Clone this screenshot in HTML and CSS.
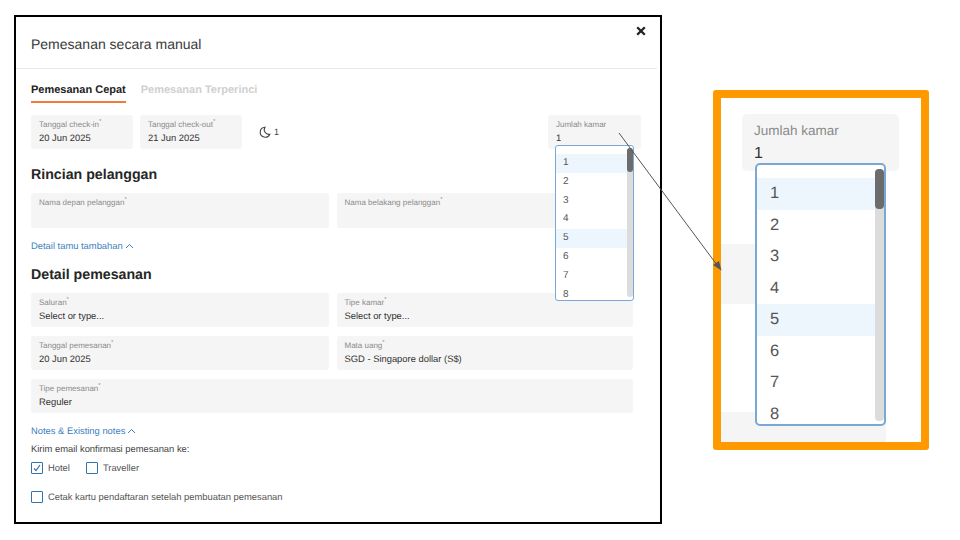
FILE: index.html
```html
<!DOCTYPE html>
<html lang="id">
    <head>
        <meta charset="utf-8">
        <title>Pemesanan secara manual</title>
        <link rel="stylesheet" href="styles.css">
    </head>
    <body>
        <div class="modal">
            <div class="modal-header">
                <div class="modal-title">Pemesanan secara manual</div>
                <svg class="close" width="10" height="10" viewBox="0 0 10 10"><path d="M1.2 1.2L8.8 8.8M8.8 1.2L1.2 8.8" stroke="#222" stroke-width="2.3"/></svg>
            </div>
            <div class="modal-body">
                <div class="tabs">
                    <div class="tab active">Pemesanan Cepat</div>
                    <div class="tab">Pemesanan Terperinci</div>
                </div>
                <div class="row-dates">
                    <div class="field field-date">
                        <div class="field-label">Tanggal check-in<sup>*</sup></div>
                        <div class="field-value">20 Jun 2025</div>
                    </div>
                    <div class="field field-date">
                        <div class="field-label">Tanggal check-out<sup>*</sup></div>
                        <div class="field-value">21 Jun 2025</div>
                    </div>
                    <div class="nights">
                        <svg width="13" height="13" viewBox="0 0 13 13"><path d="M7 1.2A5 5 0 1 0 11.8 8.2A4.6 4.6 0 0 1 7 1.2Z" fill="none" stroke="#444" stroke-width="1.1"/></svg>
                        <span>1</span>
                    </div>
                    <div class="field field-rooms">
                        <div class="field-label">Jumlah kamar</div>
                        <div class="field-value">1</div>
                        <div class="dropdown">
                            <div class="dropdown-item selected">1</div>
                            <div class="dropdown-item">2</div>
                            <div class="dropdown-item">3</div>
                            <div class="dropdown-item">4</div>
                            <div class="dropdown-item selected">5</div>
                            <div class="dropdown-item">6</div>
                            <div class="dropdown-item">7</div>
                            <div class="dropdown-item">8</div>
                            <div class="scrollbar"><div class="scrollbar-thumb"></div></div>
                        </div>
                    </div>
                </div>

                <h2 class="section-title first">Rincian pelanggan</h2>
                <div class="grid-2">
                    <div class="field field-tall">
                        <div class="field-label">Nama depan pelanggan<sup>*</sup></div>
                    </div>
                    <div class="field field-tall">
                        <div class="field-label">Nama belakang pelanggan<sup>*</sup></div>
                    </div>
                </div>
                <div class="link link-guest">Detail tamu tambahan
                    <svg width="9" height="6" viewBox="0 0 9 6"><path d="M1 5L4.5 1.5L8 5" fill="none" stroke="#3d7fc0"/></svg>
                </div>

                <h2 class="section-title">Detail pemesanan</h2>
                <div class="grid-2">
                    <div class="field">
                        <div class="field-label">Saluran<sup>*</sup></div>
                        <div class="field-value">Select or type...</div>
                    </div>
                    <div class="field">
                        <div class="field-label">Tipe kamar<sup>*</sup></div>
                        <div class="field-value">Select or type...</div>
                    </div>
                    <div class="field">
                        <div class="field-label">Tanggal pemesanan<sup>*</sup></div>
                        <div class="field-value">20 Jun 2025</div>
                    </div>
                    <div class="field">
                        <div class="field-label">Mata uang<sup>*</sup></div>
                        <div class="field-value">SGD - Singapore dollar (S$)</div>
                    </div>
                    <div class="field field-wide">
                        <div class="field-label">Tipe pemesanan<sup>*</sup></div>
                        <div class="field-value">Reguler</div>
                    </div>
                </div>
                <div class="link link-notes">Notes &amp; Existing notes
                    <svg width="9" height="6" viewBox="0 0 9 6"><path d="M1 5L4.5 1.5L8 5" fill="none" stroke="#3d7fc0"/></svg>
                </div>
                <div class="email-title">Kirim email konfirmasi pemesanan ke:</div>
                <div class="check-row">
                    <div class="check">
                        <span class="box"><svg width="10" height="10" viewBox="0 0 10 10"><path d="M2 5.5L4 7.5L8 2" fill="none" stroke="#2f73b0" stroke-width="1.2"/></svg></span>
                        Hotel
                    </div>
                    <div class="check">
                        <span class="box"></span>
                        Traveller
                    </div>
                </div>
                <div class="check check-print">
                    <span class="box"></span>
                    Cetak kartu pendaftaran setelah pembuatan pemesanan
                </div>
            </div>
        </div>

        <div class="callout">
            <div class="ghost ghost-left"></div>
            <div class="ghost ghost-bottom"></div>
            <div class="field field-zoom">
                <div class="field-label">Jumlah kamar</div>
                <div class="field-value">1</div>
                <div class="dropdown dropdown-zoom">
                    <div class="dropdown-item selected">1</div>
                    <div class="dropdown-item">2</div>
                    <div class="dropdown-item">3</div>
                    <div class="dropdown-item">4</div>
                    <div class="dropdown-item selected">5</div>
                    <div class="dropdown-item">6</div>
                    <div class="dropdown-item">7</div>
                    <div class="dropdown-item">8</div>
                    <div class="scrollbar"><div class="scrollbar-thumb"></div></div>
                </div>
            </div>
        </div>

        <svg class="arrow" width="960" height="540" viewBox="0 0 960 540">
            <path d="M619 133L717 265" stroke="#555" stroke-width="1" fill="none"/>
            <path d="M721.5 270.5L713 265L719 261Z" fill="#555"/>
        </svg>
    </body>
</html>
```

FILE: styles.css
```css
* {
    box-sizing: border-box;
}

body {
    margin: 0;
    padding: 15px 0 0 14px;
    width: 960px;
    height: 540px;
    overflow: hidden;
    display: flex;
    align-items: flex-start;
    background-color: #fff;
    font-family: "Liberation Sans", Arial, sans-serif;
    text-rendering: geometricPrecision;
    color: #333;
}

.modal {
    width: 648px;
    height: 509px;
    flex: none;
    border: 2px solid #000;
    background-color: #fff;
}

.modal-header {
    height: 52px;
    margin-right: 3px;
    padding: 19px 11px 0 15px;
    display: flex;
    justify-content: space-between;
    align-items: flex-start;
    border-bottom: 1px solid #e8e8e8;
}

.modal-title {
    font-size: 14px;
    line-height: 17px;
    color: #3a3a3a;
}

.close {
    margin-top: -10px;
}

.modal-body {
    padding: 0 27px 0 15px;
}

.tabs {
    display: flex;
    gap: 15px;
    height: 34px;
    padding-top: 14px;
}

.tab {
    height: 20px;
    font-size: 11px;
    line-height: 14px;
    font-weight: bold;
    color: #cfcfcf;
}

.tab.active {
    color: #222;
    border-bottom: 2px solid #f47a3c;
}

.row-dates {
    display: flex;
    align-items: center;
    gap: 7px;
    margin-top: 12px;
}

.field {
    position: relative;
    height: 34px;
    padding: 5px 8px;
    border-radius: 3px;
    background-color: #f5f5f5;
}

.field-tall {
    height: 35px;
}

.field-date {
    width: 102px;
}

.field-rooms {
    width: 93px;
    margin: 0 -8px 0 auto;
}

.field-label {
    font-size: 8px;
    line-height: 10px;
    color: #8a8a8a;
}

.field-label sup {
    font-size: 6px;
    line-height: 0;
}

.field-value {
    margin-top: 2px;
    font-size: 9.4px;
    line-height: 12px;
    color: #333;
}

.nights {
    display: flex;
    align-items: center;
    gap: 3px;
    margin-left: 9px;
    font-size: 9px;
    color: #444;
}

.section-title {
    margin: 0;
    padding: 14px 0 9px;
    font-size: 14.2px;
    line-height: 18px;
    font-weight: bold;
    color: #262626;
}

.section-title.first {
    padding-top: 17px;
}

.grid-2 {
    display: grid;
    grid-template-columns: 297.5px 296.5px;
    gap: 9px 8px;
}

.field-wide {
    grid-column: 1 / 3;
}

.link {
    display: flex;
    align-items: center;
    gap: 2px;
    font-size: 9.4px;
    line-height: 12px;
    color: #3d7fc0;
}

.link-guest {
    margin-top: 12px;
}

.link-notes {
    margin-top: 12px;
}

.email-title {
    margin-top: 6px;
    font-size: 9.4px;
    line-height: 12px;
    color: #444;
}

.check-row {
    display: flex;
    gap: 16px;
    margin-top: 7px;
}

.check {
    display: flex;
    align-items: center;
    gap: 5px;
    font-size: 9.4px;
    line-height: 12px;
    color: #555;
}

.check-print {
    margin-top: 17px;
}

.box {
    width: 12px;
    height: 12px;
    display: flex;
    align-items: center;
    justify-content: center;
    border: 1.5px solid #2f73b0;
    border-radius: 1px;
    background-color: #fff;
}

.dropdown {
    position: absolute;
    top: 30px;
    left: 7px;
    width: 79px;
    height: 156px;
    padding-top: 8px;
    overflow: hidden;
    border: 1.5px solid #7aa8d6;
    border-radius: 3px;
    background-color: #fff;
    z-index: 2;
}

.dropdown-item {
    height: 18.8px;
    padding-left: 7px;
    font-size: 10px;
    line-height: 18.8px;
    color: #555;
}

.dropdown-item.selected {
    background-color: #eef6fd;
}

.scrollbar {
    position: absolute;
    top: 2px;
    right: 0;
    width: 6px;
    height: 149px;
    border-radius: 3px;
    background-color: #dcdcdc;
}

.scrollbar-thumb {
    height: 24px;
    border-radius: 3px;
    background-color: #6c6c6c;
}

.callout {
    position: relative;
    width: 216px;
    height: 360px;
    flex: none;
    margin: 75px 0 0 51px;
    padding: 16px 22px 0 21px;
    border: 8px solid #ff9900;
    border-radius: 3px;
    background-color: #fff;
}

.ghost {
    position: absolute;
    background-color: #f5f5f5;
}

.ghost-left {
    top: 146px;
    left: 0;
    width: 34px;
    height: 60px;
}

.ghost-bottom {
    bottom: 0;
    left: 0;
    width: 165px;
    height: 30px;
}

.field-zoom {
    width: 157px;
    height: 57px;
    padding: 8px 12px;
    border-radius: 5px;
}

.field-zoom .field-label {
    font-size: 13.5px;
    line-height: 17px;
    color: #8a8a8a;
}

.field-zoom .field-value {
    margin-top: 6px;
    font-size: 16px;
    line-height: 18px;
}

.dropdown-zoom {
    top: 49px;
    left: 13px;
    width: 131px;
    height: 263px;
    padding-top: 13px;
    border-width: 2px;
    border-radius: 5px;
}

.dropdown-zoom .dropdown-item {
    height: 31.5px;
    padding-left: 13px;
    font-size: 16.5px;
    line-height: 31.5px;
}

.dropdown-zoom .scrollbar {
    top: 4px;
    width: 9px;
    height: 252px;
    border-radius: 4px;
}

.dropdown-zoom .scrollbar-thumb {
    height: 40px;
    border-radius: 4px;
}

.arrow {
    position: absolute;
    top: 0;
    left: 0;
    pointer-events: none;
    z-index: 3;
}
```
